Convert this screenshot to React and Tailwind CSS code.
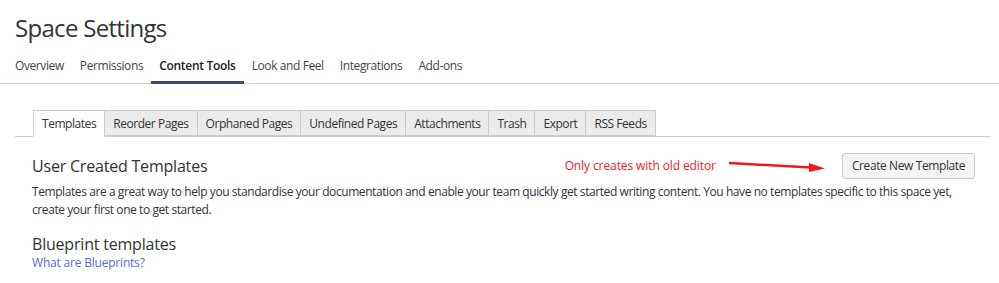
import React from 'react';

const navItems = ['Overview', 'Permissions', 'Content Tools', 'Look and Feel', 'Integrations', 'Add-ons'];
const tabs = ['Templates', 'Reorder Pages', 'Orphaned Pages', 'Undefined Pages', 'Attachments', 'Trash', 'Export', 'RSS Feeds'];

const App = () => {
    return (
        <div className="w-[999px] h-[283px] overflow-hidden bg-white text-[#333] font-['Open_Sans',sans-serif]">
            <h1 className="px-[15px] pt-[12px] text-[24px] leading-[32px] tracking-[-0.7px]">Space Settings</h1>

            <nav className="flex pl-[7px] mt-[11px] border-b border-[#d4d4d4]">
                {navItems.map((item) => (
                    <a
                        key={item}
                        className={
                            item === 'Content Tools'
                                ? 'px-[8px] pb-[4px] text-[12px] leading-[22px] tracking-[-0.3px] font-semibold text-[#222] border-b-[3px] border-[#3b4a7d] -mb-px'
                                : 'px-[8px] pb-[4px] text-[12px] leading-[22px] tracking-[-0.4px] text-[#444] border-b-[3px] border-transparent -mb-px'
                        }
                    >
                        {item}
                    </a>
                ))}
            </nav>

            <div className="mx-[15px] mt-[26px] pl-[18px] flex border-b border-[#ccc] mr-[8px]">
                {tabs.map((tab, i) => (
                    <div
                        key={tab}
                        className={
                            i === 0
                                ? 'px-2 h-[27px] leading-[26px] text-[12px] tracking-[-0.45px] bg-white border border-[#ccc] border-b-white -mb-px'
                                : 'px-2 h-[26px] leading-[25px] text-[12px] tracking-[-0.45px] bg-[#ebebeb] border border-l-0 border-[#ccc]'
                        }
                    >
                        {tab}
                    </div>
                ))}
            </div>

            <div className="pl-[32px] pr-[24px]">
                <div className="flex items-center mt-[16px]">
                    <h2 className="text-[16px] leading-[24px] tracking-[-0.2px]">User Created Templates</h2>
                    <span className="ml-auto text-[12px] text-[#f5202a] tracking-[-0.1px]">Only creates with old editor</span>
                    <svg width="100" height="14" viewBox="0 0 100 14" className="ml-[11px] mr-[15px] mt-[2px]">
                        <line x1="2" y1="3" x2="84" y2="7.5" stroke="#f01818" strokeWidth="2.5" />
                        <polygon points="82,3 98,8.5 82,12" fill="#f01818" />
                    </svg>
                    <button className="h-[26px] px-[9px] text-[12px] tracking-[-0.4px] bg-[#f4f4f4] border border-[#ccc] rounded-[3px] text-[#333]">
                        Create New Template
                    </button>
                </div>

                <p className="mt-[4px] text-[12px] leading-[18px] tracking-[-0.42px]">
                    Templates are a great way to help you standardise your documentation and enable your team quickly get started writing content. You have no templates specific to this space yet, create your first one to get started.
                </p>

                <h2 className="mt-[14px] text-[16px] leading-[22px] tracking-[-0.2px]">Blueprint templates</h2>
                <a className="block text-[12px] leading-[16px] text-[#5b67d8] tracking-[-0.2px]">What are Blueprints?</a>
            </div>
        </div>
    );
};

export default App;
